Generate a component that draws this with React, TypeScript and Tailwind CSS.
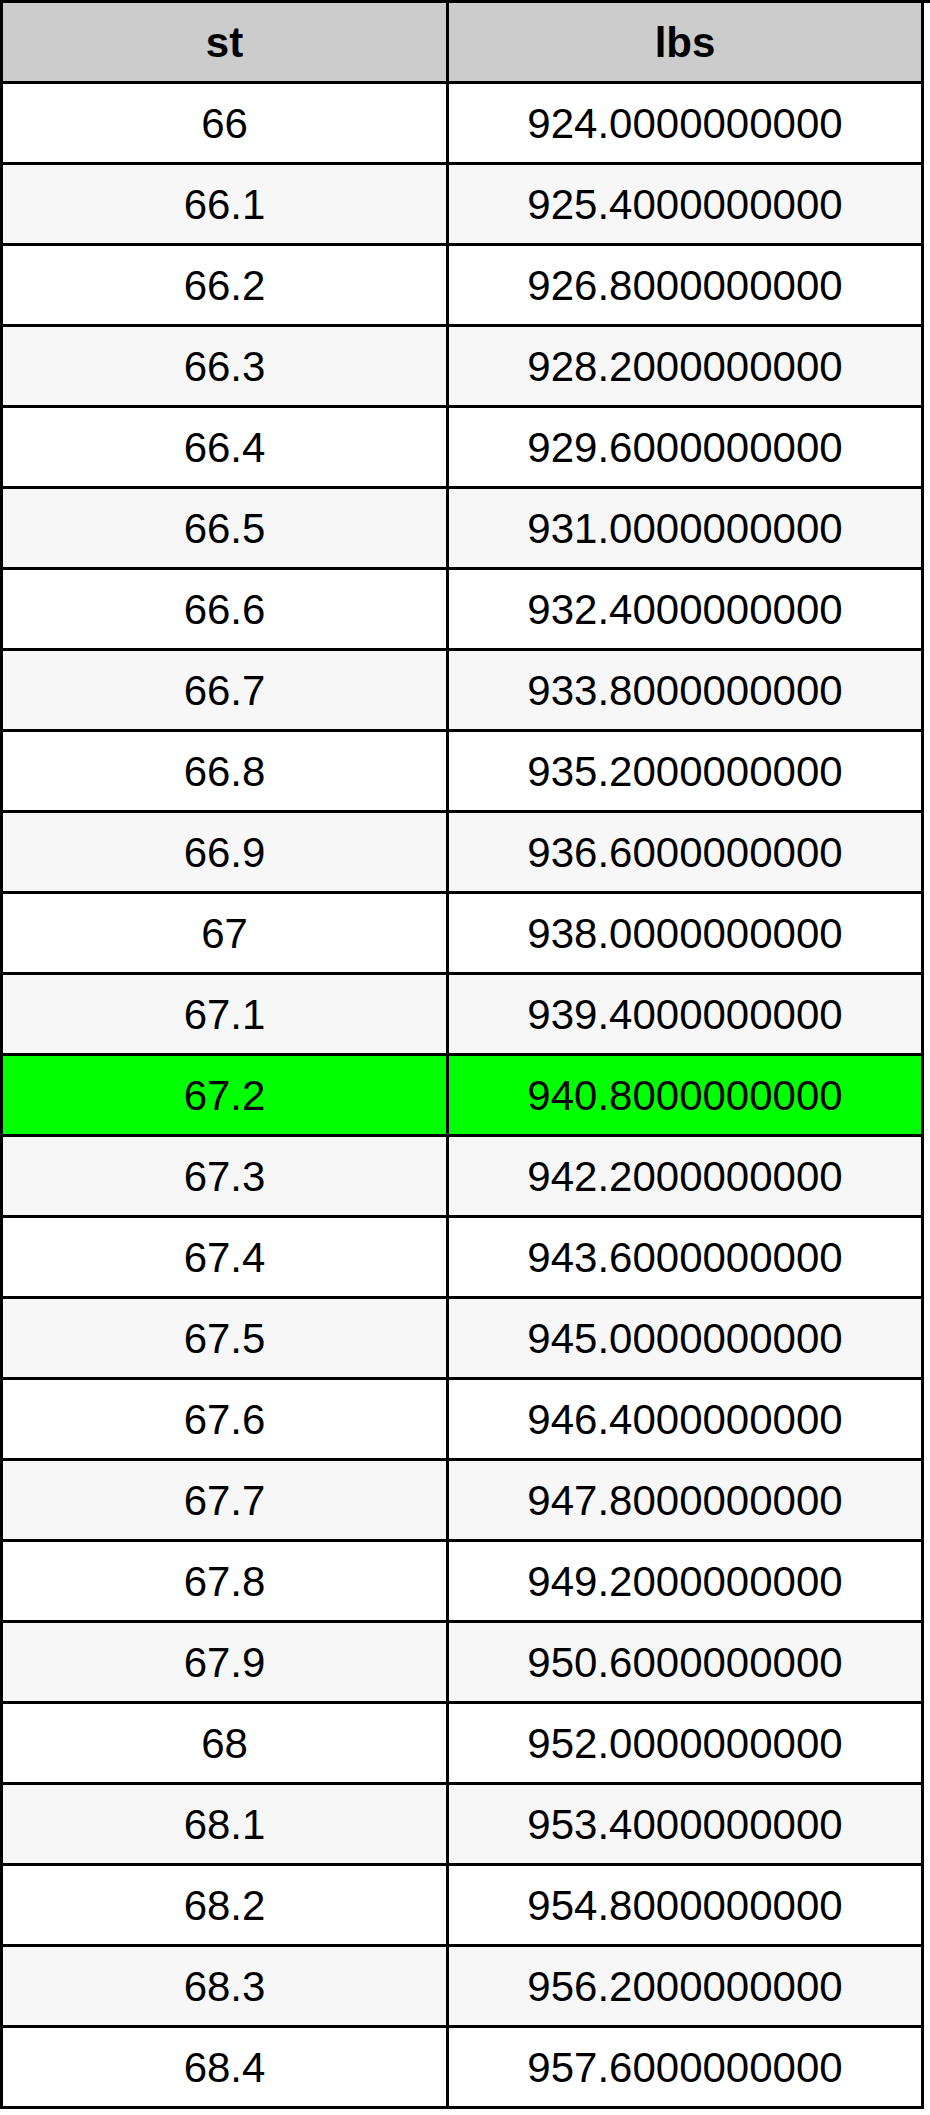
const rows: [string, string][] = [
  ['66', '924.0000000000'],
  ['66.1', '925.4000000000'],
  ['66.2', '926.8000000000'],
  ['66.3', '928.2000000000'],
  ['66.4', '929.6000000000'],
  ['66.5', '931.0000000000'],
  ['66.6', '932.4000000000'],
  ['66.7', '933.8000000000'],
  ['66.8', '935.2000000000'],
  ['66.9', '936.6000000000'],
  ['67', '938.0000000000'],
  ['67.1', '939.4000000000'],
  ['67.2', '940.8000000000'],
  ['67.3', '942.2000000000'],
  ['67.4', '943.6000000000'],
  ['67.5', '945.0000000000'],
  ['67.6', '946.4000000000'],
  ['67.7', '947.8000000000'],
  ['67.8', '949.2000000000'],
  ['67.9', '950.6000000000'],
  ['68', '952.0000000000'],
  ['68.1', '953.4000000000'],
  ['68.2', '954.8000000000'],
  ['68.3', '956.2000000000'],
  ['68.4', '957.6000000000'],
];

const HIGHLIGHT = '67.2';

export default function App() {
  return (
    <div className="w-[930px] bg-white font-['Liberation_Sans',Arial,sans-serif] text-black">
      <div className="grid grid-cols-[446px_475px] gap-0 border-l-[3px] border-t-[3px] border-black">
        {/* Header */}
        <div className="h-[81px] flex items-center justify-center border-r-[3px] border-b-[3px] border-black bg-[#cccccc] text-[42px] font-bold">
          st
        </div>
        <div className="h-[81px] flex items-center justify-center border-r-[3px] border-b-[3px] border-black bg-[#cccccc] text-[42px] font-bold">
          lbs
        </div>

        {rows.map(([st, lbs], i) => {
          const bg = st === HIGHLIGHT ? 'bg-[#00ff00]' : i % 2 === 0 ? 'bg-white' : 'bg-[#f7f7f7]';
          return [
            <div
              key={st + '-a'}
              className={`h-[81px] flex items-center justify-center border-r-[3px] border-b-[3px] border-black text-[42px] ${bg}`}
            >
              {st}
            </div>,
            <div
              key={st + '-b'}
              className={`h-[81px] flex items-center justify-center border-r-[3px] border-b-[3px] border-black text-[42px] ${bg}`}
            >
              {lbs}
            </div>,
          ];
        })}
      </div>
    </div>
  );
}
